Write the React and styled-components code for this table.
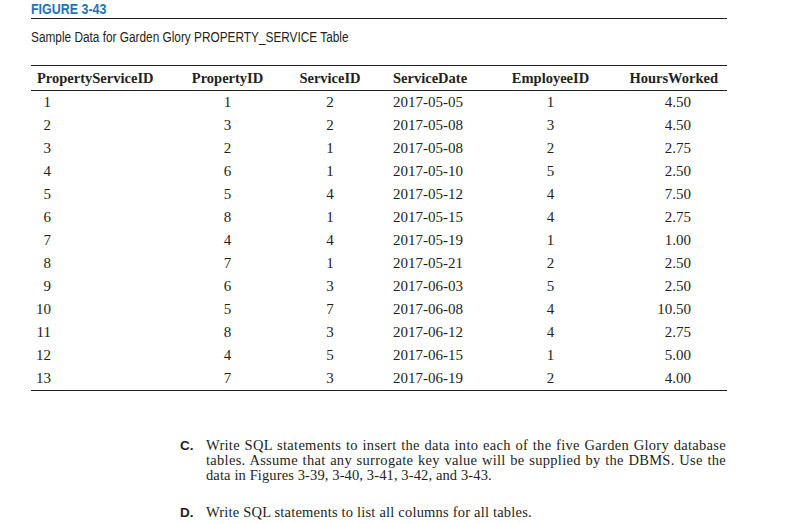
import React from "react";
import styled, { createGlobalStyle } from "styled-components";

const GlobalStyle = createGlobalStyle`
  html, body {
    margin: 0;
    padding: 0;
    background: #fff;
  }
  body {
    color: #231f20;
  }
`;

const Page = styled.div`
  width: 787px;
  height: 524px;
  padding-left: 31px;
  box-sizing: border-box;
  overflow: hidden;
`;

const FigureLabel = styled.div`
  width: 696px;
  height: 18px;
  line-height: 18px;
  font-family: "Liberation Sans", Arial, sans-serif;
  font-weight: 700;
  font-size: 15px;
  color: #1f73b7;
  border-bottom: 1px solid #231f20;
`;

const Caption = styled.div`
  margin-top: 9px;
  height: 18px;
  line-height: 18px;
  font-family: "Liberation Sans", Arial, sans-serif;
  font-size: 14px;
  color: #231f20;
`;

/* no narrow face installed: squeeze the sans to look condensed */
const Narrow = styled.span`
  display: inline-block;
  white-space: nowrap;
  transform: scaleX(${p => p.k || 0.84});
  transform-origin: left center;
`;

const Table = styled.div`
  margin-top: 19px;
  width: 696px;
  border-top: 1px solid #231f20;
  border-bottom: 1px solid #231f20;
  font-family: "Liberation Serif", serif;
`;

const Row = styled.div`
  display: grid;
  grid-template-columns: 139px 115px 90px 118px 115px 119px;
  height: 23px;
  line-height: ${p => (p.head ? "22px" : "23px")};
  padding-top: ${p => (p.head ? "1px" : "0")};
  border-bottom: ${p => (p.head ? "1px solid #231f20" : "none")};
  font-size: ${p => (p.head ? "14.5px" : "15px")};
  font-weight: ${p => (p.head ? 700 : 400)};
`;

const Cell = styled.div`
  white-space: nowrap;
  text-align: ${p => p.align || "center"};
  padding-left: ${p => p.pl || 0}px;
  padding-right: ${p => p.pr || 0}px;
`;

const Num = styled.span`
  display: inline-block;
  width: 16px;
  text-align: right;
`;

const Questions = styled.div`
  margin-top: 47px;
  margin-left: 149px;
  width: 546px;
  display: flex;
  flex-direction: column;
  gap: 22px;
`;

const Question = styled.div`
  display: flex;
  align-items: baseline;
`;

const Letter = styled.div`
  flex: 0 0 26px;
  font-family: "Liberation Sans", Arial, sans-serif;
  font-weight: 700;
  font-size: 13.5px;
  line-height: 15px;
`;

const Body = styled.div`
  flex: 1 1 auto;
  font-family: "Liberation Serif", serif;
  font-size: 14.5px;
  line-height: 15px;
`;

const Line = styled.div`
  white-space: nowrap;
  text-align: ${p => (p.justify ? "justify" : "left")};
  text-align-last: ${p => (p.justify ? "justify" : "left")};
  letter-spacing: ${p => p.ls || 0}px;
`;

const rows = [
  [1, 1, 2, "2017-05-05", 1, "4.50"],
  [2, 3, 2, "2017-05-08", 3, "4.50"],
  [3, 2, 1, "2017-05-08", 2, "2.75"],
  [4, 6, 1, "2017-05-10", 5, "2.50"],
  [5, 5, 4, "2017-05-12", 4, "7.50"],
  [6, 8, 1, "2017-05-15", 4, "2.75"],
  [7, 4, 4, "2017-05-19", 1, "1.00"],
  [8, 7, 1, "2017-05-21", 2, "2.50"],
  [9, 6, 3, "2017-06-03", 5, "2.50"],
  [10, 5, 7, "2017-06-08", 4, "10.50"],
  [11, 8, 3, "2017-06-12", 4, "2.75"],
  [12, 4, 5, "2017-06-15", 1, "5.00"],
  [13, 7, 3, "2017-06-19", 2, "4.00"],
];

export default function App() {
  return (
    <Page>
      <GlobalStyle />
      <FigureLabel>
        <Narrow k={0.83}>FIGURE 3-43</Narrow>
      </FigureLabel>
      <Caption>
        <Narrow k={0.845}>Sample Data for Garden Glory PROPERTY_SERVICE Table</Narrow>
      </Caption>
      <Table>
        <Row head>
          <Cell align="left" pl={6}>PropertyServiceID</Cell>
          <Cell>PropertyID</Cell>
          <Cell>ServiceID</Cell>
          <Cell align="left" pl={18}>ServiceDate</Cell>
          <Cell>EmployeeID</Cell>
          <Cell align="right" pr={9}>HoursWorked</Cell>
        </Row>
        {rows.map(r => (
          <Row key={r[0]}>
            <Cell align="left" pl={4}>
              <Num>{r[0]}</Num>
            </Cell>
            <Cell>{r[1]}</Cell>
            <Cell>{r[2]}</Cell>
            <Cell align="left" pl={18}>{r[3]}</Cell>
            <Cell>{r[4]}</Cell>
            <Cell align="right" pr={36}>{r[5]}</Cell>
          </Row>
        ))}
      </Table>
      <Questions>
        <Question>
          <Letter>C.</Letter>
          <Body>
            <Line justify ls={0.3}>
              Write SQL statements to insert the data into each of the five Garden Glory database
            </Line>
            <Line justify ls={0.3}>
              tables. Assume that any surrogate key value will be supplied by the DBMS. Use the
            </Line>
            <Line ls={0.12}>data in Figures 3-39, 3-40, 3-41, 3-42, and 3-43.</Line>
          </Body>
        </Question>
        <Question>
          <Letter>D.</Letter>
          <Body>
            <Line ls={0.2}>Write SQL statements to list all columns for all tables.</Line>
          </Body>
        </Question>
      </Questions>
    </Page>
  );
}
